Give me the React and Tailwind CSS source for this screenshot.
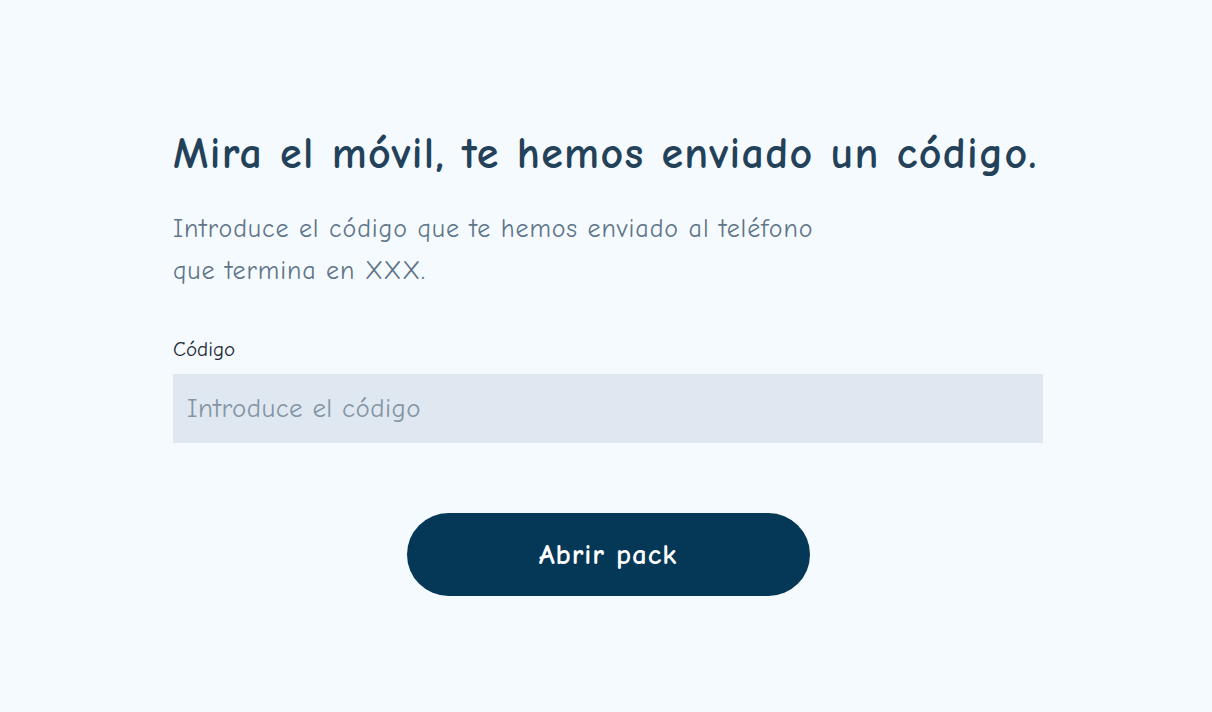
export default function App() {
  return (
    <div
      className="min-h-screen w-full bg-[#f5faff] flex justify-center pl-[4px]"
      style={{ fontFamily: '"Comic Sans MS", "Comic Neue", "DejaVu Sans", sans-serif' }}
    >
      <div className="w-[870px] pt-[126px]">
        <h1 className="text-[44px] leading-[56px] font-bold text-[#23425a] tracking-[1.3px] whitespace-nowrap">
          Mira el móvil, te hemos enviado un código.
        </h1>
        <p className="mt-[26px] text-[26px] leading-[42px] text-[#5f7588] tracking-[0.9px]">
          Introduce el código que te hemos enviado al teléfono
          <br />
          que termina en XXX.
        </p>
        <label className="block mt-[44px] text-[21px] leading-[26px] text-[#1e2b37]">Código</label>
        <input
          type="text"
          placeholder="Introduce el código"
          className="mt-[12px] block w-full h-[69px] bg-[#dfe8f0] px-[14px] text-[27px] tracking-[0.4px] text-[#2a3b4a] placeholder-[#8495a5] outline-none"
        />
        <div className="flex justify-center mt-[70px]">
          <button className="w-[403px] h-[83px] rounded-full bg-[#053856] text-white text-[29px] font-bold tracking-[0.9px]">
            Abrir pack
          </button>
        </div>
      </div>
    </div>
  )
}
